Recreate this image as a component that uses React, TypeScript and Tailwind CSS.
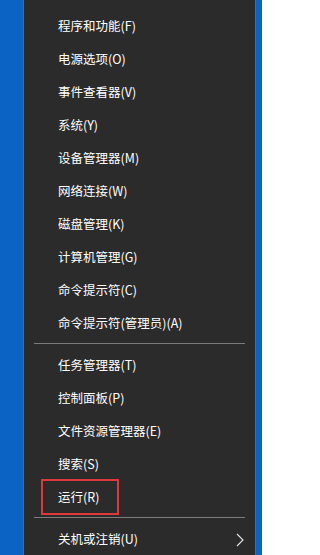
import React from 'react';

type Entry = { label: string; sep?: false; boxed?: boolean; arrow?: boolean } | { sep: true };

const entries: Entry[] = [
  { label: '程序和功能(F)' },
  { label: '电源选项(O)' },
  { label: '事件查看器(V)' },
  { label: '系统(Y)' },
  { label: '设备管理器(M)' },
  { label: '网络连接(W)' },
  { label: '磁盘管理(K)' },
  { label: '计算机管理(G)' },
  { label: '命令提示符(C)' },
  { label: '命令提示符(管理员)(A)' },
  { sep: true },
  { label: '任务管理器(T)' },
  { label: '控制面板(P)' },
  { label: '文件资源管理器(E)' },
  { label: '搜索(S)' },
  { label: '运行(R)', boxed: true },
  { sep: true },
  { label: '关机或注销(U)', arrow: true },
];

const App: React.FC = () => {
  return (
    <div
      className="flex w-[262px] h-[555px] overflow-hidden bg-[#0b63c4]"
      style={{ fontFamily: '"Microsoft YaHei", "Noto Sans CJK SC", "Liberation Sans", sans-serif' }}
    >
      <div className="w-[23px] shrink-0" />
      {/* menu panel */}
      <div className="w-[233px] shrink-0 bg-[#2b2b2b] border-x border-[#5a6a7e] pt-[10px]">
        {entries.map((e, i) =>
          e.sep ? (
            <div key={i} className="h-[9px] pt-[3px] pl-[10px] pr-[10px]">
              <div className="h-px bg-[#7b7b7b]" />
            </div>
          ) : (
            <div key={i} className="relative h-[33px] flex items-center pl-[34px] pr-3 text-[12.5px] text-white">
              {e.boxed && (
                <div className="absolute left-[17px] top-[-2px] w-[78px] h-[36px] border-2 border-[#e0383a]" />
              )}
              <span>{e.label}</span>
              {e.arrow && (
                <svg className="absolute right-[11px] top-[10px]" width="8" height="14" viewBox="0 0 8 14" fill="none">
                  <path d="M1 1l6 6-6 6" stroke="#e6e6e6" strokeWidth="1.1" />
                </svg>
              )}
            </div>
          )
        )}
      </div>
      <div className="flex-1" />
    </div>
  );
};

export default App;
